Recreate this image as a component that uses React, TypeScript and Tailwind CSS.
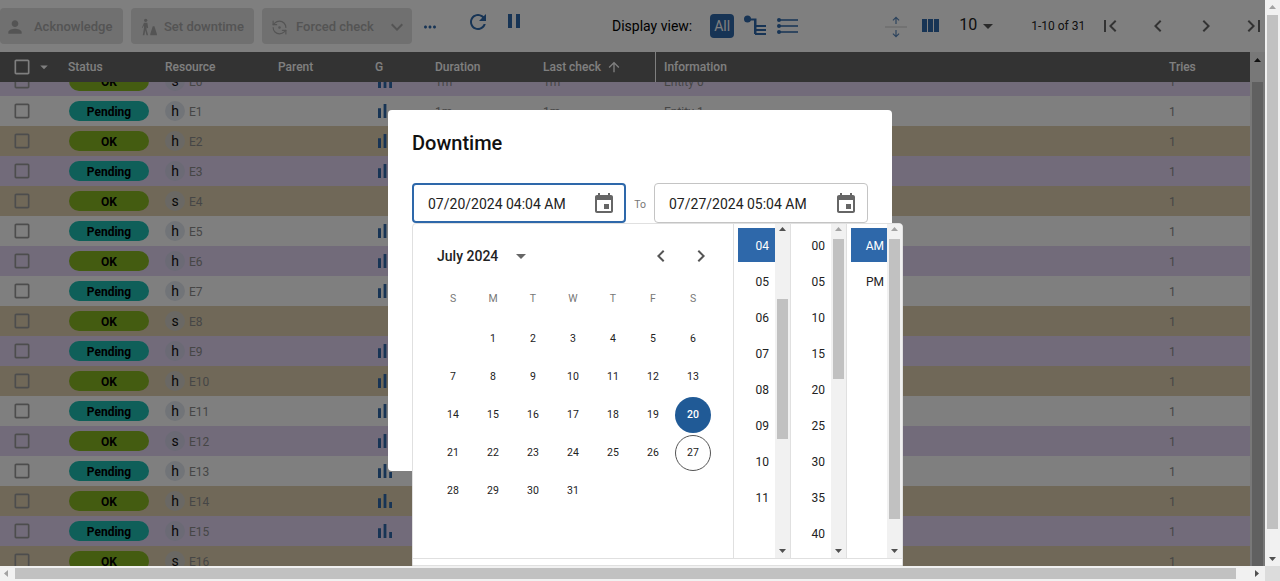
import { RefreshCcwDot } from 'lucide-react';

const P = {
  person: 'M12 12c2.21 0 4-1.79 4-4s-1.79-4-4-4-4 1.79-4 4 1.79 4 4 4zm0 2c-2.67 0-8 1.34-8 4v2h16v-2c0-2.66-5.33-4-8-4z',
  refresh: 'M17.65 6.35C16.2 4.9 14.21 4 12 4c-4.42 0-7.99 3.58-7.99 8s3.57 8 7.99 8c3.73 0 6.84-2.55 7.73-6h-2.08c-.82 2.33-3.04 4-5.65 4-3.31 0-6-2.69-6-6s2.69-6 6-6c1.66 0 3.14.69 4.22 1.78L13 11h7V4l-2.35 2.35z',
  pause: 'M6 19h4V5H6v14zm8-14v14h4V5h-4z',
  event: 'M17 12h-5v5h5v-5zM16 1v2H8V1H6v2H5c-1.11 0-1.99.9-1.99 2L3 19c0 1.1.89 2 2 2h14c1.1 0 2-.9 2-2V5c0-1.1-.9-2-2-2h-1V1h-2zm3 18H5V8h14v11z',
  left: 'M15.41 7.41 14 6l-6 6 6 6 1.41-1.41L10.83 12z',
  right: 'M10 6 8.59 7.41 13.17 12l-4.58 4.59L10 18l6-6z',
  drop: 'M7 10l5 5 5-5z',
  up: 'M4 12l1.41 1.41L11 7.83V20h2V7.83l5.58 5.59L20 12l-8-8-8 8z',
  bars: 'M5 9.2h3V19H5zM10.6 5h2.8v14h-2.8zm5.6 8H19v6h-2.8z',
  box: 'M19 5v14H5V5h14m0-2H5c-1.1 0-2 .9-2 2v14c0 1.1.9 2 2 2h14c1.1 0 2-.9 2-2V5c0-1.1-.9-2-2-2z',
  columns: 'M10 18h5V5h-5v13zm-6 0h5V5H4v13zM16 5v13h5V5h-5z',
  first: 'M18.41 16.59 13.82 12l4.59-4.59L17 6l-6 6 6 6zM6 6h2v12H6z',
  last: 'M5.59 7.41 10.18 12l-4.59 4.59L7 18l6-6-6-6zM16 6h2v12h-2z',
  more: 'M6 10c-1.1 0-2 .9-2 2s.9 2 2 2 2-.9 2-2-.9-2-2-2zm12 0c-1.1 0-2 .9-2 2s.9 2 2 2 2-.9 2-2-.9-2-2-2zm-6 0c-1.1 0-2 .9-2 2s.9 2 2 2 2-.9 2-2-.9-2-2-2z',
  expand: 'M16.59 8.59 12 13.17 7.41 8.59 6 10l6 6 6-6z',
};

function Icon({ d, className }: { d: string; className?: string }) {
  return (
    <svg viewBox="0 0 24 24" fill="currentColor" className={`shrink-0 ${className}`}>
      <path d={d} />
    </svg>
  );
}

function DowntimeIcon({ className }: { className?: string }) {
  return (
    <svg viewBox="0 0 24 24" fill="currentColor" className={`shrink-0 ${className}`}>
      <circle cx="8" cy="4" r="2" />
      <path d="M6 7h4l1 6-1.500.5L9 11v4l2 7H9l-1.500-6L6.500 22H4.500l1.500-9V10l-1.500 3H3.500z" />
      <path d="M16.500 11h2l3 9.500v1.500h-8v-1.500z" />
    </svg>
  );
}

function Arrow({ dir, className }: { dir: 'up' | 'down' | 'left' | 'right'; className: string }) {
  const pts = { up: '1,6 8,6 4.500,2', down: '1,3 8,3 4.500,7', left: '6,1 6,8 2,4.500', right: '3,1 3,8 7,4.500' };
  return (
    <svg viewBox="0 0 9 9" className={`w-[9px] h-[9px] shrink-0 ${className}`} fill="currentColor">
      <polygon points={pts[dir]} />
    </svg>
  );
}

type Row = { bg: string; pending: boolean; kind: string; bars: boolean };

const purple = 'bg-[#e4d7f5]';
const tan = 'bg-[#e0d1b1]';
const white = 'bg-white';
const backgrounds = [purple, white, tan, purple, tan, white, purple, white, tan, purple, tan, white, purple, white, tan, purple, tan];

const rows: Row[] = backgrounds.map((bg, i) => ({
  bg,
  pending: i % 2 === 1,
  kind: i % 4 === 0 ? 's' : 'h',
  bars: i !== 4 && i !== 8 && i !== 16,
}));

const gridCols = 'grid grid-cols-[68px_97px_113px_97px_60px_108px_112px_514px_1fr]';

function Toolbar() {
  return (
    <div className="h-[52px] shrink-0 flex items-start bg-white text-[#2e68aa] whitespace-nowrap">
      <button className="mt-2 w-[123px] shrink-0 h-9 rounded bg-[#e0e0e0] flex items-center pt-[2px] pl-[5px] gap-[9px] text-[13px] font-medium text-[#a8a8a8]">
        <Icon d={P.person} className="w-5 h-5" />
        Acknowledge
      </button>
      <button className="ml-2 mt-2 w-[123px] shrink-0 h-9 rounded bg-[#e0e0e0] flex items-center pt-[2px] pl-[8px] gap-[5px] text-[13px] font-medium text-[#a8a8a8]">
        <DowntimeIcon className="w-5 h-5" />
        Set downtime
      </button>
      <button className="ml-2 mt-2 w-[150px] shrink-0 h-9 rounded bg-[#e0e0e0] flex items-center pt-[2px] pl-[9px] text-[13px] font-medium text-[#a8a8a8]">
        <RefreshCcwDot className="w-[17px] h-[17px] shrink-0" strokeWidth={1.6} />
        <span className="ml-[8px]">Forced check</span>
        <Icon d={P.expand} className="w-6 h-6 ml-auto mr-[3px]" />
      </button>
      <Icon d={P.more} className="w-[18px] h-[18px] ml-[9px] mt-[18px]" />
      <Icon d={P.refresh} className="w-6 h-6 ml-[27px] mt-[10px]" />
      <Icon d={P.pause} className="w-6 h-6 ml-3 mt-[9px]" />
      <span className="ml-[86px] mt-[18px] text-sm leading-4 text-black">Display view:</span>
      <span className="ml-[18px] mt-[14px] w-6 h-6 shrink-0 rounded bg-[#2e68aa] text-white text-sm flex items-center justify-center">All</span>
      <svg viewBox="0 0 24 24" className="w-6 h-6 shrink-0 ml-[9px] mt-[14px]" fill="currentColor">
        <circle cx="4.500" cy="5" r="3.500" />
        <path d="M6 4.500h7.500V20H11V6.500H6zM12 11h11v2H12zM12 15h11v2H12zM12 19h11v2H12z" />
      </svg>
      <svg viewBox="0 0 24 24" className="w-6 h-6 shrink-0 ml-[9px] mt-[14px]" fill="currentColor">
        <path d="M3 5.200h19v1.600H3zM3 11.200h19v1.600H3zM3 17.200h19v1.600H3z" />
        <circle cx="3" cy="6" r="2" />
        <circle cx="3" cy="12" r="2" />
        <circle cx="3" cy="18" r="2" />
      </svg>
      <svg viewBox="0 0 24 24" className="w-6 h-6 shrink-0 ml-[84px] mt-[15px]" fill="currentColor">
        <path d="M1 11.500h22v1H1z" fill="#c8c8c8" />
        <path opacity="0.800" d="M12 1.500 8.500 5l.8.8 2.100-2.100V9h1.200V3.700l2.100 2.100.8-.8zM12 22.500 8.500 19l.8-.8 2.100 2.100V15h1.200v5.300l2.100-2.100.8.8z" />
      </svg>
      <Icon d={P.columns} className="w-6 h-6 ml-[10px] mt-[14px]" />
      <span className="ml-[17px] mt-[17px] text-base leading-4 text-[#222]">10</span>
      <Icon d={P.drop} className="w-6 h-6 -ml-[1px] mt-[14px] text-[#555]" />
      <span className="ml-[31px] mt-[19px] text-xs leading-[14px] text-[#222]">1-10 of 31</span>
      <Icon d={P.first} className="w-6 h-6 ml-[13px] mt-[14px] text-[#666]" />
      <Icon d={P.left} className="w-6 h-6 ml-6 mt-[14px] text-[#666]" />
      <Icon d={P.right} className="w-6 h-6 ml-6 mt-[14px] text-[#666]" />
      <Icon d={P.last} className="w-6 h-6 ml-6 mt-[14px] text-[#666]" />
    </div>
  );
}

function TableHead() {
  return (
    <div className={`${gridCols} h-[30px] shrink-0 items-center bg-[#666] text-white text-xs font-medium relative`}>
      <div className="flex items-center pl-[12px]">
        <Icon d={P.box} className="w-5 h-5" />
        <Icon d={P.drop} className="w-[18px] h-[18px] ml-[3px]" />
      </div>
      <span>Status</span>
      <span>Resource</span>
      <span>Parent</span>
      <span>G</span>
      <span>Duration</span>
      <span className="flex items-center gap-[5px]">
        Last check
        <Icon d={P.up} className="w-4 h-4" />
      </span>
      <span className="h-full flex items-center border-l border-white pl-2">Information</span>
      <span>Tries</span>
    </div>
  );
}

function TableRow({ row, index }: { row: Row; index: number }) {
  return (
    <div className={`${gridCols} h-[30px] shrink-0 items-center text-xs text-[#8c8c8c] ${row.bg}`}>
      <div className="pl-[12px]">
        <Icon d={P.box} className="w-5 h-5 text-[#9a9a9a]" />
      </div>
      <div>
        <span className={`ml-px w-20 h-5 pt-[2px] rounded-full flex items-center justify-center font-bold text-black ${row.pending ? 'bg-[#1ebeb3]' : 'bg-[#88b922]'}`}>
          {row.pending ? 'Pending' : 'OK'}
        </span>
      </div>
      <div className="flex items-center gap-1">
        <span className="w-5 h-5 rounded-full bg-[#c8d2e1]/50 flex items-center justify-center text-sm leading-none text-[#111]">{row.kind}</span>
        <span className="pt-[2px]">E{index}</span>
      </div>
      <div />
      <div>{row.bars && <Icon d={P.bars} className="w-6 h-6 text-[#2e68aa] -ml-[2px]" />}</div>
      <div className="pt-[2px]">1m</div>
      <div className="pt-[2px]">1m</div>
      <div className="pl-[9px] pt-[2px]">Entity {index}</div>
      <div className="pt-[2px]">1</div>
    </div>
  );
}

function ScrollTrack({ top, size, dim }: { top: string; size: string; dim?: boolean }) {
  return (
    <div className="w-[15px] shrink-0 h-full bg-[#f1f1f1] flex flex-col items-center overflow-hidden relative">
      <Arrow dir="up" className={`mt-[1px] ${dim ? 'text-[#a3a3a3]' : 'text-[#505050]'}`} />
      <div className={`w-[11px] shrink-0 bg-[#c1c1c1] ${top} ${size}`} />
      <Arrow dir="down" className="absolute bottom-[3px] text-[#505050]" />
    </div>
  );
}

function TimeColumn({ items, selected, width, pad }: { items: string[]; selected: string; width: string; pad: string }) {
  return (
    <div className={`${width} shrink-0 pt-1 pl-1 flex flex-col text-xs text-[#222] overflow-hidden`}>
      {items.map((item) => (
        <div
          key={item}
          className={`h-[34px] mb-[2px] shrink-0 flex items-center justify-end pt-px ${pad} ${item === selected ? 'bg-[#2e68aa] text-white' : ''}`}
        >
          {item}
        </div>
      ))}
    </div>
  );
}

function Calendar() {
  const weeks = [
    ['', '1', '2', '3', '4', '5', '6'],
    ['7', '8', '9', '10', '11', '12', '13'],
    ['14', '15', '16', '17', '18', '19', '20'],
    ['21', '22', '23', '24', '25', '26', '27'],
    ['28', '29', '30', '31', '', '', ''],
  ];
  return (
    <div className="w-[321px] shrink-0 border-r border-[#e0e0e0] pl-5 pr-[19px]">
      <div className="flex items-center h-6 mt-5 pl-1 text-[#222]">
        <span className="text-sm font-medium">July 2024</span>
        <Icon d={P.drop} className="w-6 h-6 ml-[11px] text-[#666]" />
        <Icon d={P.left} className="w-6 h-6 ml-[116px] text-[#555]" />
        <Icon d={P.right} className="w-6 h-6 ml-4 text-[#555]" />
      </div>
      <div className="grid grid-cols-7 mt-[25px] w-[280px] text-[10.500px] text-[#777] text-center h-[27px]">
        {['S', 'M', 'T', 'W', 'T', 'F', 'S'].map((d, i) => (
          <span key={i} className="leading-[12px]">{d}</span>
        ))}
      </div>
      <div className="grid grid-cols-7 w-[280px] text-[10.500px] text-[#222]">
        {weeks.flat().map((d, i) => (
          <div key={i} className="h-[38px] flex items-center justify-center">
            {d === '20' && <span className="w-9 h-9 rounded-full bg-[#205a96] text-white font-medium flex items-center justify-center">{d}</span>}
            {d === '27' && <span className="w-9 h-9 rounded-full border border-[#555] flex items-center justify-center">{d}</span>}
            {d !== '20' && d !== '27' && d}
          </div>
        ))}
      </div>
    </div>
  );
}

function Picker() {
  const hours = ['04', '05', '06', '07', '08', '09', '10', '11'];
  const minutes = ['00', '05', '10', '15', '20', '25', '30', '35', '40'];
  return (
    <div className="absolute left-[412px] top-[223px] w-[491px] h-[343px] bg-white border border-[#e0e0e0] rounded-t overflow-hidden flex flex-col">
      <div className="h-[335px] shrink-0 flex border-b border-[#e0e0e0]">
        <Calendar />
        <TimeColumn items={hours} selected="04" width="w-[41px]" pad="pr-[6px]" />
        <ScrollTrack top="mt-[65px]" size="h-[140px]" />
        <div className="w-px shrink-0 bg-[#e0e0e0]" />
        <TimeColumn items={minutes} selected="" width="w-[40px]" pad="pr-[6px]" />
        <ScrollTrack top="mt-[5px]" size="h-[140px]" dim />
        <div className="w-px shrink-0 bg-[#e0e0e0]" />
        <TimeColumn items={['AM', 'PM']} selected="AM" width="w-[40px]" pad="pr-[3px]" />
        <ScrollTrack top="mt-[5px]" size="h-[280px]" dim />
      </div>
    </div>
  );
}

function DateField({ value, focused }: { value: string; focused?: boolean }) {
  return (
    <div className={`w-[214px] h-10 rounded flex items-center justify-between pt-[2px] text-sm text-[#222] ${focused ? 'border-2 border-[#2e68aa] pl-[14px] pr-[8px]' : 'border border-[#c4c4c4] pl-[14px] pr-[9px]'}`}>
      {value}
      <Icon d={P.event} className="w-6 h-6 text-[#666]" />
    </div>
  );
}

function DowntimeDialog() {
  return (
    <div className="absolute left-[388px] top-[110px] w-[504px] h-[361px] bg-white rounded px-6">
      <h2 className="mt-[18px] h-[30px] text-xl leading-[30px] font-medium text-[#111]">Downtime</h2>
      <div className="mt-[25px] flex items-center">
        <DateField value="07/20/2024 04:04 AM" focused />
        <span className="w-7 pt-[3px] text-center text-[10.500px] text-[#777]">To</span>
        <DateField value="07/27/2024 05:04 AM" />
      </div>
    </div>
  );
}

export default function App() {
  return (
    <div className="w-[1280px] h-[581px] overflow-hidden bg-white relative font-['Roboto',sans-serif] flex">
      <div className="w-[1265px] h-[581px] shrink-0 flex flex-col">
        <div className="relative h-[566px] shrink-0 overflow-hidden">
          <Toolbar />
          <div className="flex h-[514px]">
            <div className="w-[1250px] shrink-0 flex flex-col overflow-hidden">
              <TableHead />
              <div className="-mt-4 flex flex-col">
                {rows.map((row, i) => (
                  <TableRow key={i} row={row} index={i} />
                ))}
              </div>
            </div>
            <div className="w-[15px] shrink-0 bg-[#f1f1f1] flex flex-col items-center">
              <Arrow dir="up" className="mt-[4px] text-[#222]" />
              <div className="w-[11px] h-[600px] shrink-0 mt-[17px] bg-[#c1c1c1]" />
            </div>
          </div>
          <div className="absolute inset-0 bg-black/50" />
          <DowntimeDialog />
          <Picker />
        </div>
        <div className="h-[15px] bg-[#f1f1f1] flex items-center">
          <Arrow dir="left" className="ml-[2px] text-[#a3a3a3]" />
          <div className="ml-[4px] w-[1221px] h-[11px] bg-[#c1c1c1]" />
          <Arrow dir="right" className="ml-[16px] text-[#505050]" />
        </div>
      </div>
      <div className="w-[15px] h-full flex flex-col items-center bg-[#f1f1f1]">
        <div className="w-[15px] h-[566px] flex flex-col items-center relative">
          <Arrow dir="up" className="mt-[3px] text-[#a3a3a3]" />
          <div className="w-[11px] h-[514px] mt-[3px] bg-[#c1c1c1]" />
          <Arrow dir="down" className="absolute bottom-[3px] text-[#505050]" />
        </div>
        <div className="w-[15px] h-[15px] bg-[#dcdcdc]" />
      </div>
    </div>
  );
}
